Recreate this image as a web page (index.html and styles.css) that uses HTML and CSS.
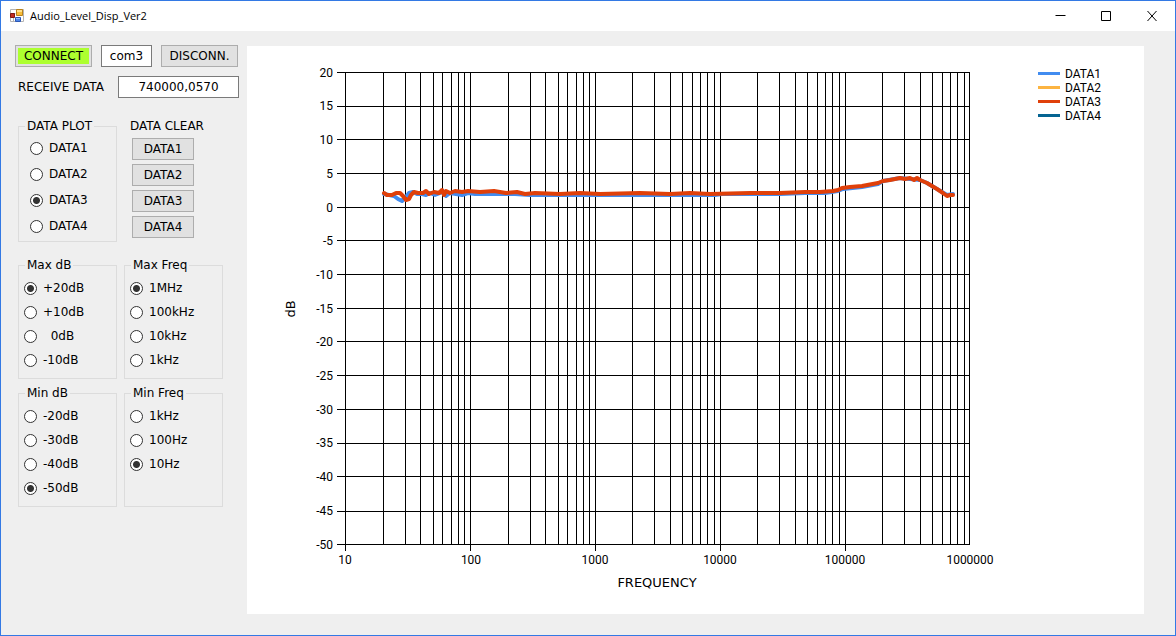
FILE: index.html
```html
<!DOCTYPE html>
<html lang="en">
<head>
<meta charset="utf-8">
<title>Audio_Level_Disp_Ver2</title>
<link rel="stylesheet" href="styles.css">
</head>
<body>
<div class="window">
  <header class="titlebar">
    <svg class="app-icon" width="14" height="14" viewBox="0 0 14 14" aria-hidden="true">
      <path d="M.5 .5h13v12H.5z" fill="#fff" stroke="#b4b4b4"/>
      <path d="M.5 4.500h5M3.500 9v4" stroke="#b4b4b4" fill="none"/>
      <path d="M.5 4.500h4v4h-4z" fill="#c22b20" stroke="#7d1712"/>
      <path d="M6.500 .5h6v6h-6z" fill="#f8bd38" stroke="#b9821b"/>
      <path d="M7 1h5v2H7z" fill="#ffe08a"/>
      <path d="M5.500 8.500h5v4h-5z" fill="#4d86e8" stroke="#2b56b4"/>
      <path d="M6 9h4v1H6z" fill="#9cc0fa"/>
    </svg>
    <h1 class="title">Audio_Level_Disp_Ver2</h1>
    <div class="caption-buttons">
      <button class="caption" type="button" aria-label="Minimize"><svg width="11" height="11" viewBox="0 0 11 11"><path d="M.5 4.500h10"/></svg></button>
      <button class="caption" type="button" aria-label="Maximize"><svg width="11" height="11" viewBox="0 0 11 11"><path d="M.5 .5h9v9H.5z"/></svg></button>
      <button class="caption" type="button" aria-label="Close"><svg width="11" height="11" viewBox="0 0 11 11"><path d="M.5 0l9 10M9.500 0l-9 10"/></svg></button>
    </div>
  </header>

  <main class="client">
    <form class="sidebar">
      <div class="row">
        <button class="button connect" type="button"><span>CONNECT</span></button>
        <input class="text port" type="text" value="com3" aria-label="Port">
        <button class="button wide" type="button">DISCONN.</button>
      </div>
      <div class="row receive">
        <label for="received">RECEIVE DATA</label>
        <input class="text received" id="received" type="text" value="740000,0570">
      </div>

      <div class="groups plots">
        <fieldset class="group roomy">
          <legend>DATA PLOT</legend>
          <label><input type="radio" name="plot">DATA1</label>
          <label><input type="radio" name="plot">DATA2</label>
          <label><input type="radio" name="plot" checked>DATA3</label>
          <label><input type="radio" name="plot">DATA4</label>
        </fieldset>
        <div class="clear">
          <span class="clear-title">DATA CLEAR</span>
          <button class="button" type="button">DATA1</button>
          <button class="button" type="button">DATA2</button>
          <button class="button" type="button">DATA3</button>
          <button class="button" type="button">DATA4</button>
        </div>
      </div>

      <div class="groups">
        <fieldset class="group">
          <legend>Max dB</legend>
          <label><input type="radio" name="maxdb" checked>+20dB</label>
          <label><input type="radio" name="maxdb">+10dB</label>
          <label><input type="radio" name="maxdb">&nbsp;&nbsp;0dB</label>
          <label><input type="radio" name="maxdb">-10dB</label>
        </fieldset>
        <fieldset class="group">
          <legend>Max Freq</legend>
          <label><input type="radio" name="maxfreq" checked>1MHz</label>
          <label><input type="radio" name="maxfreq">100kHz</label>
          <label><input type="radio" name="maxfreq">10kHz</label>
          <label><input type="radio" name="maxfreq">1kHz</label>
        </fieldset>
        <fieldset class="group">
          <legend>Min dB</legend>
          <label><input type="radio" name="mindb">-20dB</label>
          <label><input type="radio" name="mindb">-30dB</label>
          <label><input type="radio" name="mindb">-40dB</label>
          <label><input type="radio" name="mindb" checked>-50dB</label>
        </fieldset>
        <fieldset class="group">
          <legend>Min Freq</legend>
          <label><input type="radio" name="minfreq">1kHz</label>
          <label><input type="radio" name="minfreq">100Hz</label>
          <label><input type="radio" name="minfreq" checked>10Hz</label>
        </fieldset>
      </div>
    </form>

    <section class="panel">
      <svg class="chart" viewBox="247 46 897 568" role="img" aria-label="Level in dB against frequency">
        <defs>
          <path id="decade" d="M.5 72v472M38.500 72v472M60.500 72v472M75.500 72v472M88.500 72v472M97.500 72v472M106.500 72v472M113.500 72v472M119.500 72v472"/>
          <path id="decade-late" d="M.5 72v472M37.500 72v472M59.500 72v472M75.500 72v472M87.500 72v472M97.500 72v472M105.500 72v472M112.500 72v472M119.500 72v472"/>
        </defs>
        <g class="grid">
          <use href="#decade" x="345"/>
          <use href="#decade" x="470"/>
          <use href="#decade-late" x="595"/>
          <use href="#decade-late" x="720"/>
          <use href="#decade-late" x="845"/>
          <path d="M969.500 72v473"/>
          <path d="M337 72.500h633M337 106.500h633M337 139.500h633M337 173.500h633M337 207.500h633M337 240.500h633M337 274.500h633M337 308.500h633M337 341.500h633M337 375.500h633M337 409.500h633M337 443.500h633M337 476.500h633M337 511.500h633M337 544.500h633"/>
          <path d="M345.500 544v7M470.500 544v7M595.500 544v7M720.500 544v7M845.500 544v7"/>
        </g>
        <polyline class="series trace data1" points="384,194 389,195 394,196 398,199 402,201 406,197 409,193 413,192 417,194 422,194 426,195 430,193 435,195 440,193 443,191 446,196 450,193 456,194 462,195 468,193 475,194 485,194 495,194 505,194 515,194 530,195 560,195 580,195 620,195 650,195 660,195 680,195 692,195 700,195 715,195 722,194 780,194 805,193 825,193 838,191 843,189 862,187 878,184 883,181 900,178 920,180 927,183 937,189 947,195 953,194"/>
        <polyline class="series trace data3" points="384,193 387,195 392,195 396,193 400,193 403,196 406,200 409,199 411,195 414,192 418,193 423,193 426,191 429,194 434,192 439,193 442,190 444,195 446,191 450,193 455,191 462,192 468,191 480,192 494,191 506,193 517,192 525,194 535,193 560,194 580,193 600,194 640,193 670,194 690,193 710,194 750,193 780,193 805,192 820,192 833,191 838,190 842,188 850,187 862,186 878,183 883,181 890,180 900,178 905,179 910,178 914,180 917,178 920,180 927,183 937,189 943,193 947,196 950,195 953,195"/>
        <g class="ticks y-ticks">
          <text x="333" y="77">20</text><text x="333" y="110">15</text><text x="333" y="144">10</text><text x="333" y="178">5</text><text x="333" y="212">0</text>
          <text x="333" y="245">-5</text><text x="333" y="279">-10</text><text x="333" y="313">-15</text><text x="333" y="346">-20</text><text x="333" y="380">-25</text>
          <text x="333" y="414">-30</text><text x="333" y="447">-35</text><text x="333" y="481">-40</text><text x="333" y="515">-45</text><text x="333" y="549">-50</text>
        </g>
        <g class="ticks x-ticks">
          <text x="345" y="564">10</text><text x="471" y="564">100</text><text x="595" y="564">1000</text><text x="720" y="564">10000</text><text x="845" y="564">100000</text><text x="970" y="564">1000000</text>
        </g>
        <text class="axis-title" x="657" y="587">FREQUENCY</text>
        <text class="axis-title" transform="translate(295 309) rotate(-90)">dB</text>
        <path class="series data1" d="M1038 73.500h22"/><path class="series data2" d="M1038 87.500h22"/>
        <path class="series data3" d="M1038 101.500h22"/><path class="series data4" d="M1038 115.500h22"/>
        <g class="ticks">
          <text x="1065" y="78">DATA1</text><text x="1065" y="92">DATA2</text><text x="1065" y="106">DATA3</text><text x="1065" y="120">DATA4</text>
        </g>
      </svg>
    </section>
  </main>
</div>
</body>
</html>
```
FILE: styles.css
```css
* { box-sizing: border-box; }

body {
  margin: 0;
  color: #000;
  font: 12px/16px "DejaVu Sans", Verdana, sans-serif;
}

button, input { font: inherit; color: inherit; margin: 0; }

.window {
  display: flex;
  flex-direction: column;
  min-height: 100vh;
  border: 1px solid #3379e4;
  background: #efefef;
}

.titlebar {
  display: flex;
  align-items: center;
  height: 30px;
  padding-left: 9px;
  background: #fff;
}

.title {
  flex: 1;
  margin: 0 0 0 6px;
  font: 11px/16px "Open Sans", "Noto Sans", sans-serif;
}

.caption-buttons { display: flex; }

.caption {
  display: grid;
  place-items: center;
  width: 46px;
  height: 28px;
  padding: 0;
  border: 0;
  background: none;
}

.caption svg { fill: none; stroke: #000; }

.client {
  display: flex;
  flex: 1;
  padding: 14px 31px 21px 14px;
}

.sidebar { flex: none; width: 232px; }

.row {
  display: flex;
  align-items: center;
  gap: 9px;
}

.receive {
  justify-content: space-between;
  margin-top: 9px;
  padding: 0 8px 0 3px;
}

.button {
  width: 62px;
  height: 22px;
  padding: 0;
  border: 1px solid #adadad;
  background: #e1e1e1;
  text-align: center;
}

.wide, .connect { width: 77px; }

.connect { padding: 2px; }

.connect span {
  display: block;
  background: #adff2f;
}

.text {
  height: 22px;
  padding: 0;
  border: 1px solid #7a7a7a;
  background: #fff;
  text-align: center;
}

.port { width: 51px; }
.received { width: 121px; }

.groups {
  display: grid;
  grid-template-columns: 99px 99px;
  gap: 6px 7px;
  padding-left: 3px;
}

.plots { margin: 20px 0 15px; }

.group {
  min-width: 0;
  min-height: 122px;
  margin: 0;
  padding: 3px 0 0 5px;
  border: 1px solid #dcdcdc;
}

.group legend {
  margin-left: 1px;
  padding: 0 2px;
}

.group label {
  display: flex;
  align-items: center;
  gap: 6px;
  height: 24px;
}

.group input {
  appearance: none;
  width: 13px;
  height: 13px;
  border: 1px solid #333;
  border-radius: 50%;
  background: #fff;
}

.group input:checked {
  background: radial-gradient(circle, #333 3px, #fff 4px);
}

.roomy { min-height: 124px; padding: 1px 0 0 11px; }
.roomy legend { margin-left: -5px; }
.roomy label { height: 26px; }

.clear {
  display: flex;
  flex-direction: column;
  gap: 4px;
  padding-left: 8px;
}

.clear-title {
  margin-left: -2px;
  white-space: nowrap;
}

.panel {
  flex: 1;
  min-width: 0;
  margin-top: 1px;
  background: #fff;
}

.chart {
  display: block;
  width: 100%;
  height: auto;
}

.grid {
  fill: none;
  stroke: #000;
}

.series {
  fill: none;
  stroke-width: 3px;
  stroke-linejoin: round;
}

.trace {
  stroke-width: 4px;
  stroke-linecap: round;
}

.data1 { stroke: #418cf0; }
.data2 { stroke: #fcb441; }
.data3 { stroke: #e0400a; }
.data4 { stroke: #056492; }

.ticks { font: 12px Roboto, sans-serif; }
.axis-title { font-size: 13px; }
.y-ticks { text-anchor: end; }
.x-ticks, .axis-title { text-anchor: middle; }
```
